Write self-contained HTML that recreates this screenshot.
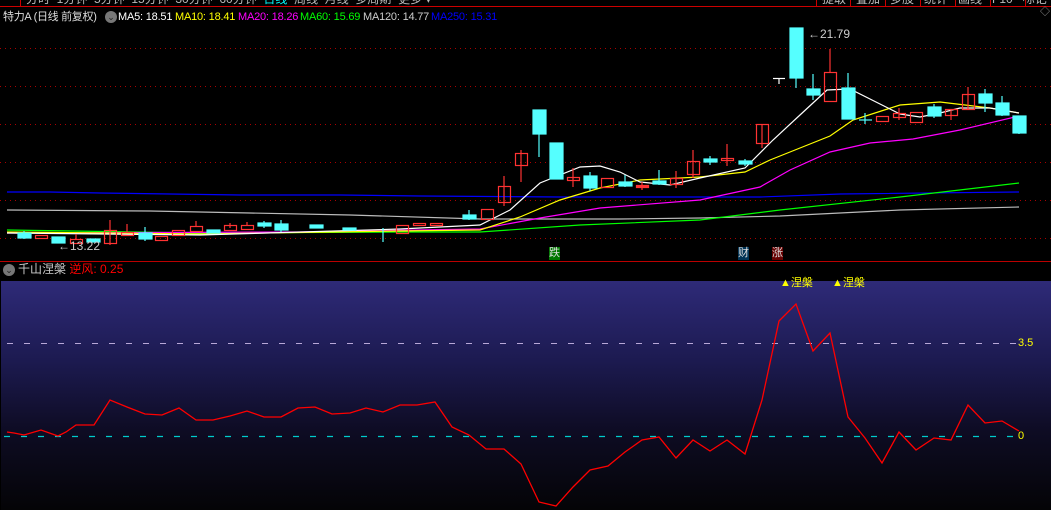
<!DOCTYPE html>
<html><head><meta charset="utf-8"><style>
html,body{margin:0;padding:0;background:#000;width:1051px;height:510px;overflow:hidden;font-family:"Liberation Sans","Noto Sans CJK SC",sans-serif}
.t{position:absolute;font-size:12px;white-space:nowrap;line-height:14px}
.m{font-size:11px;letter-spacing:-0.2px}
</style></head><body>
<div style="position:absolute;left:0;top:0;width:1051px;height:510px">
<!-- top bar -->
<div class="t" style="left:26px;top:-8px;color:#bbb;font-size:12px">分时 &nbsp;1分钟 &nbsp;5分钟 &nbsp;15分钟 &nbsp;30分钟 &nbsp;60分钟 &nbsp;<span style="color:#0ff">日线</span> &nbsp;周线 &nbsp;月线 &nbsp;多周期 &nbsp;更多 ▾</div>
<div style="position:absolute;left:20px;top:0;width:1px;height:7px;background:#c00"></div>
<div style="position:absolute;left:0;top:6px;width:1051px;height:1px;background:#c00"></div>
<div class="t" style="left:822px;top:-8px;color:#bbb">提取 &nbsp;&nbsp;叠加 &nbsp;&nbsp;多股 &nbsp;&nbsp;统计 &nbsp;&nbsp;画线 &nbsp;&nbsp;F10 &nbsp;&nbsp;标记</div>
<div style="position:absolute;left:816px;top:0;width:1px;height:6px;background:#c00"></div>
<div style="position:absolute;left:850px;top:0;width:1px;height:6px;background:#c00"></div>
<div style="position:absolute;left:885px;top:0;width:1px;height:6px;background:#c00"></div>
<div style="position:absolute;left:920px;top:0;width:1px;height:6px;background:#c00"></div>
<div style="position:absolute;left:955px;top:0;width:1px;height:6px;background:#c00"></div>
<div style="position:absolute;left:990px;top:0;width:1px;height:6px;background:#c00"></div>
<div style="position:absolute;left:1025px;top:0;width:1px;height:6px;background:#c00"></div>
<!-- header -->
<div class="t" style="left:3px;top:10px;color:#ddd;font-size:11px;letter-spacing:-0.3px">特力A (日线 前复权)</div>
<div style="position:absolute;left:105px;top:11px;width:12px;height:12px;border-radius:50%;background:#777;color:#222;font-size:9px;text-align:center;line-height:12px">⌄</div>
<div class="t m" style="left:118px;top:10px;color:#fff">MA5: 18.51</div>
<div class="t m" style="left:175px;top:10px;color:#ff0">MA10: 18.41</div>
<div class="t m" style="left:238px;top:10px;color:#f0f">MA20: 18.26</div>
<div class="t m" style="left:300px;top:10px;color:#0f0">MA60: 15.69</div>
<div class="t m" style="left:363px;top:10px;color:#ccc">MA120: 14.77</div>
<div class="t m" style="left:431px;top:10px;color:#00f">MA250: 15.31</div>
<div class="t" style="left:1040px;top:6px;color:#999;font-size:10px">◇</div>
<svg width="1051" height="510" style="position:absolute;left:0;top:0">
<g stroke="#a00" stroke-dasharray="1,4" stroke-width="1">
<line x1="0" y1="48.5" x2="1051" y2="48.5"/><line x1="0" y1="86.5" x2="1051" y2="86.5"/><line x1="0" y1="124.5" x2="1051" y2="124.5"/><line x1="0" y1="162.5" x2="1051" y2="162.5"/><line x1="0" y1="200.5" x2="1051" y2="200.5"/><line x1="0" y1="238.5" x2="1051" y2="238.5"/>
</g>
<!-- MAs -->
<g fill="none" stroke-width="1.2">
<polyline stroke="#00f" points="7,192 50,192 100,193 170,194 240,195 340,195 420,196 560,197 760,197 840,194 1019,192"/>
<polyline stroke="#bbb" points="7,210 150,211 250,213 350,215 480,219 620,219 700,218 780,216 900,210 1019,207"/>
<polyline stroke="#0f0" points="7,230 200,233 400,232 480,232 580,225 700,220 780,210 900,197 1019,183"/>
<polyline stroke="#f0f" points="7,233 300,232 480,229 540,218 600,208 700,200 760,187 790,170 830,152 870,143 913,139 960,130 1019,116"/>
<polyline stroke="#ff0" points="7,232 200,234 400,231 480,230 520,217 560,200 600,188 640,180 700,177 745,172 770,160 800,148 830,136 853,120 900,105 940,102 990,108 1019,113"/>
<polyline stroke="#fff" points="7,233 200,235 400,229 480,225 510,210 540,183 580,167 600,166 620,172 640,182 670,185 700,178 745,168 773,140 800,115 827,90 850,89 880,104 900,114 920,117 940,113 960,108 990,108 1019,113"/>
</g>
<!-- candles -->
<g stroke-width="1.2">
<g stroke="#5ff" fill="#5ff">
<line x1="24" y1="231" x2="24" y2="239"/><rect x="18" y="233" width="13" height="5"/>
<rect x="52" y="237" width="13" height="6"/>
<rect x="87" y="239" width="13" height="3"/>
<line x1="145" y1="227" x2="145" y2="241"/><rect x="139" y="233" width="13" height="6"/>
<rect x="207" y="230" width="13" height="3"/>
<line x1="264" y1="221" x2="264" y2="228"/><rect x="258" y="223" width="13" height="3"/>
<line x1="281" y1="220" x2="281" y2="232"/><rect x="275" y="224" width="13" height="6"/>
<rect x="310" y="225" width="13" height="3"/>
<line x1="383" y1="228" x2="383" y2="242"/>
<rect x="343" y="228" width="13" height="2"/>
<line x1="469" y1="210" x2="469" y2="220"/><rect x="463" y="215" width="13" height="4"/>
<line x1="539" y1="110" x2="539" y2="157"/><rect x="533" y="110" width="13" height="24"/>
<rect x="550" y="143" width="13" height="36"/>
<line x1="590" y1="172" x2="590" y2="191"/><rect x="584" y="176" width="13" height="12"/>
<line x1="625" y1="175" x2="625" y2="187"/><rect x="619" y="182" width="13" height="4"/>
<line x1="659" y1="170" x2="659" y2="185"/><rect x="653" y="181" width="13" height="3"/>
<line x1="710" y1="156" x2="710" y2="165"/><rect x="704" y="159" width="13" height="3"/>
<line x1="745" y1="159" x2="745" y2="166"/><rect x="739" y="161" width="13" height="3"/>
<line x1="796" y1="28" x2="796" y2="88"/><rect x="790" y="28" width="13" height="50"/>
<line x1="813" y1="74" x2="813" y2="100"/><rect x="807" y="89" width="13" height="6"/>
<line x1="848" y1="73" x2="848" y2="119"/><rect x="842" y="88" width="13" height="31"/>
<line x1="865" y1="113" x2="865" y2="124"/><line x1="859" y1="120" x2="872" y2="120"/>
<line x1="934" y1="104" x2="934" y2="118"/><rect x="928" y="107" width="13" height="9"/>
<line x1="985" y1="89" x2="985" y2="112"/><rect x="979" y="94" width="13" height="9"/>
<line x1="1002" y1="96" x2="1002" y2="116"/><rect x="996" y="103" width="13" height="12"/>
<line x1="1019" y1="116" x2="1019" y2="134"/><rect x="1013" y="116" width="13" height="17"/>
</g>
<g stroke="#f33" fill="none">
<rect x="35.5" y="235.5" width="12" height="3"/>
<line x1="76" y1="234" x2="76" y2="239"/><rect x="70.5" y="239.5" width="12" height="4"/>
<line x1="110" y1="220" x2="110" y2="245"/><rect x="104.5" y="230.5" width="12" height="13"/>
<line x1="127" y1="224" x2="127" y2="232"/><rect x="121.5" y="232.5" width="12" height="3"/>
<rect x="155.5" y="236.5" width="12" height="4"/>
<rect x="172.5" y="230.5" width="12" height="5"/>
<line x1="196" y1="221" x2="196" y2="227"/><rect x="190.5" y="226.5" width="12" height="5"/>
<line x1="230" y1="223" x2="230" y2="228"/><rect x="224.5" y="225.5" width="12" height="5"/>
<line x1="247" y1="222" x2="247" y2="226"/><rect x="241.5" y="225.5" width="12" height="4"/>
<rect x="396.5" y="225.5" width="12" height="8"/>
<rect x="413.5" y="223.5" width="12" height="2"/>
<rect x="430.5" y="223.5" width="12" height="2"/>
<rect x="481.5" y="209.5" width="12" height="10"/>
<line x1="504" y1="176" x2="504" y2="206"/><rect x="498.5" y="186.5" width="12" height="16"/>
<line x1="521" y1="150" x2="521" y2="182"/><rect x="515.5" y="153.5" width="12" height="12"/>
<line x1="573" y1="168" x2="573" y2="187"/><rect x="567.5" y="177.5" width="12" height="3"/>
<rect x="601.5" y="178.5" width="12" height="9"/>
<line x1="642" y1="182" x2="642" y2="190"/><rect x="636.5" y="185.5" width="12" height="2" fill="#f33"/>
<line x1="676" y1="171" x2="676" y2="188"/><rect x="670.5" y="178.5" width="12" height="6"/>
<line x1="693" y1="150" x2="693" y2="178"/><rect x="687.5" y="161.5" width="12" height="13"/>
<line x1="727" y1="144" x2="727" y2="166"/><rect x="721.5" y="158.5" width="12" height="2"/>
<line x1="762" y1="124" x2="762" y2="148"/><rect x="756.5" y="124.5" width="12" height="19"/>
<line x1="830" y1="49" x2="830" y2="72"/><rect x="824.5" y="72.5" width="12" height="29"/>
<rect x="876.5" y="116.5" width="12" height="5"/>
<line x1="899" y1="108" x2="899" y2="120"/><rect x="893.5" y="113.5" width="12" height="4"/>
<rect x="910.5" y="112.5" width="12" height="10"/>
<line x1="951" y1="109" x2="951" y2="120"/><rect x="945.5" y="109.5" width="12" height="6"/>
<line x1="968" y1="87" x2="968" y2="109"/><rect x="962.5" y="94.5" width="12" height="15"/>
</g>
<g stroke="#fff"><line x1="773" y1="78.5" x2="785" y2="78.5"/><line x1="779" y1="78" x2="779" y2="84"/></g>
</g>
</svg>
<div class="t" style="left:808px;top:27px;color:#ccc;font-size:12px">←21.79</div>
<div class="t" style="left:58px;top:239px;color:#ccc;font-size:12px">←13.22</div>
<div class="t" style="left:549px;top:247px;background:#070;color:#ddd;font-size:11px;line-height:13px">跌</div>
<div class="t" style="left:738px;top:247px;background:#035;color:#ddd;font-size:11px;line-height:13px">财</div>
<div class="t" style="left:772px;top:247px;background:#600;color:#ddd;font-size:11px;line-height:13px">涨</div>
<div style="position:absolute;left:0;top:261px;width:1051px;height:1px;background:#b00"></div>
<div style="position:absolute;left:3px;top:264px;width:12px;height:12px;border-radius:50%;background:#777;color:#222;font-size:9px;text-align:center;line-height:12px">⌄</div>
<div class="t" style="left:18px;top:262px;color:#ccc;font-size:12px">千山涅槃 <span style="color:#f00">逆风: 0.25</span></div>
<div style="position:absolute;left:1px;top:281px;width:1050px;height:229px;background:linear-gradient(#2e2a78 0%,#1c1a50 35%,#0e0c24 65%,#040406 100%)"></div>
<svg width="1051" height="510" style="position:absolute;left:0;top:0">
<line x1="7" y1="343.5" x2="1020" y2="343.5" stroke="#b8a8d8" stroke-dasharray="6,11"/>
<line x1="4" y1="436.5" x2="1020" y2="436.5" stroke="#0cc" stroke-width="1.3" stroke-dasharray="6,11"/>
<polyline fill="none" stroke="#f00" stroke-width="1.3" points="7,432 14,433 24,435 41,430 58,436 66,432 76,425 94,425 110,400 127,407 145,414 162,415 179,408 196,420 213,420 230,416 247,411 264,417 281,417 298,408 315,407 332,414 350,413 366,408 383,412 400,405 417,405 435,402 452,427 469,435 486,449 504,449 521,464 539,502 556,506 573,487 590,470 608,466 625,452 642,440 659,437 676,458 693,440 710,451 727,440 745,454 762,400 779,321 796,304 813,351 830,333 848,417 865,438 882,463 899,432 916,450 934,438 951,440 968,405 985,423 1002,421 1019,431"/>
</svg>
<div class="t" style="left:780px;top:276px;color:#ff0;font-size:11px">▲涅槃</div>
<div class="t" style="left:832px;top:276px;color:#ff0;font-size:11px">▲涅槃</div>
<div class="t" style="left:1018px;top:336px;color:#ff0;font-size:11px">3.5</div>
<div class="t" style="left:1018px;top:429px;color:#ff0;font-size:11px">0</div>
</div>
</body></html>
